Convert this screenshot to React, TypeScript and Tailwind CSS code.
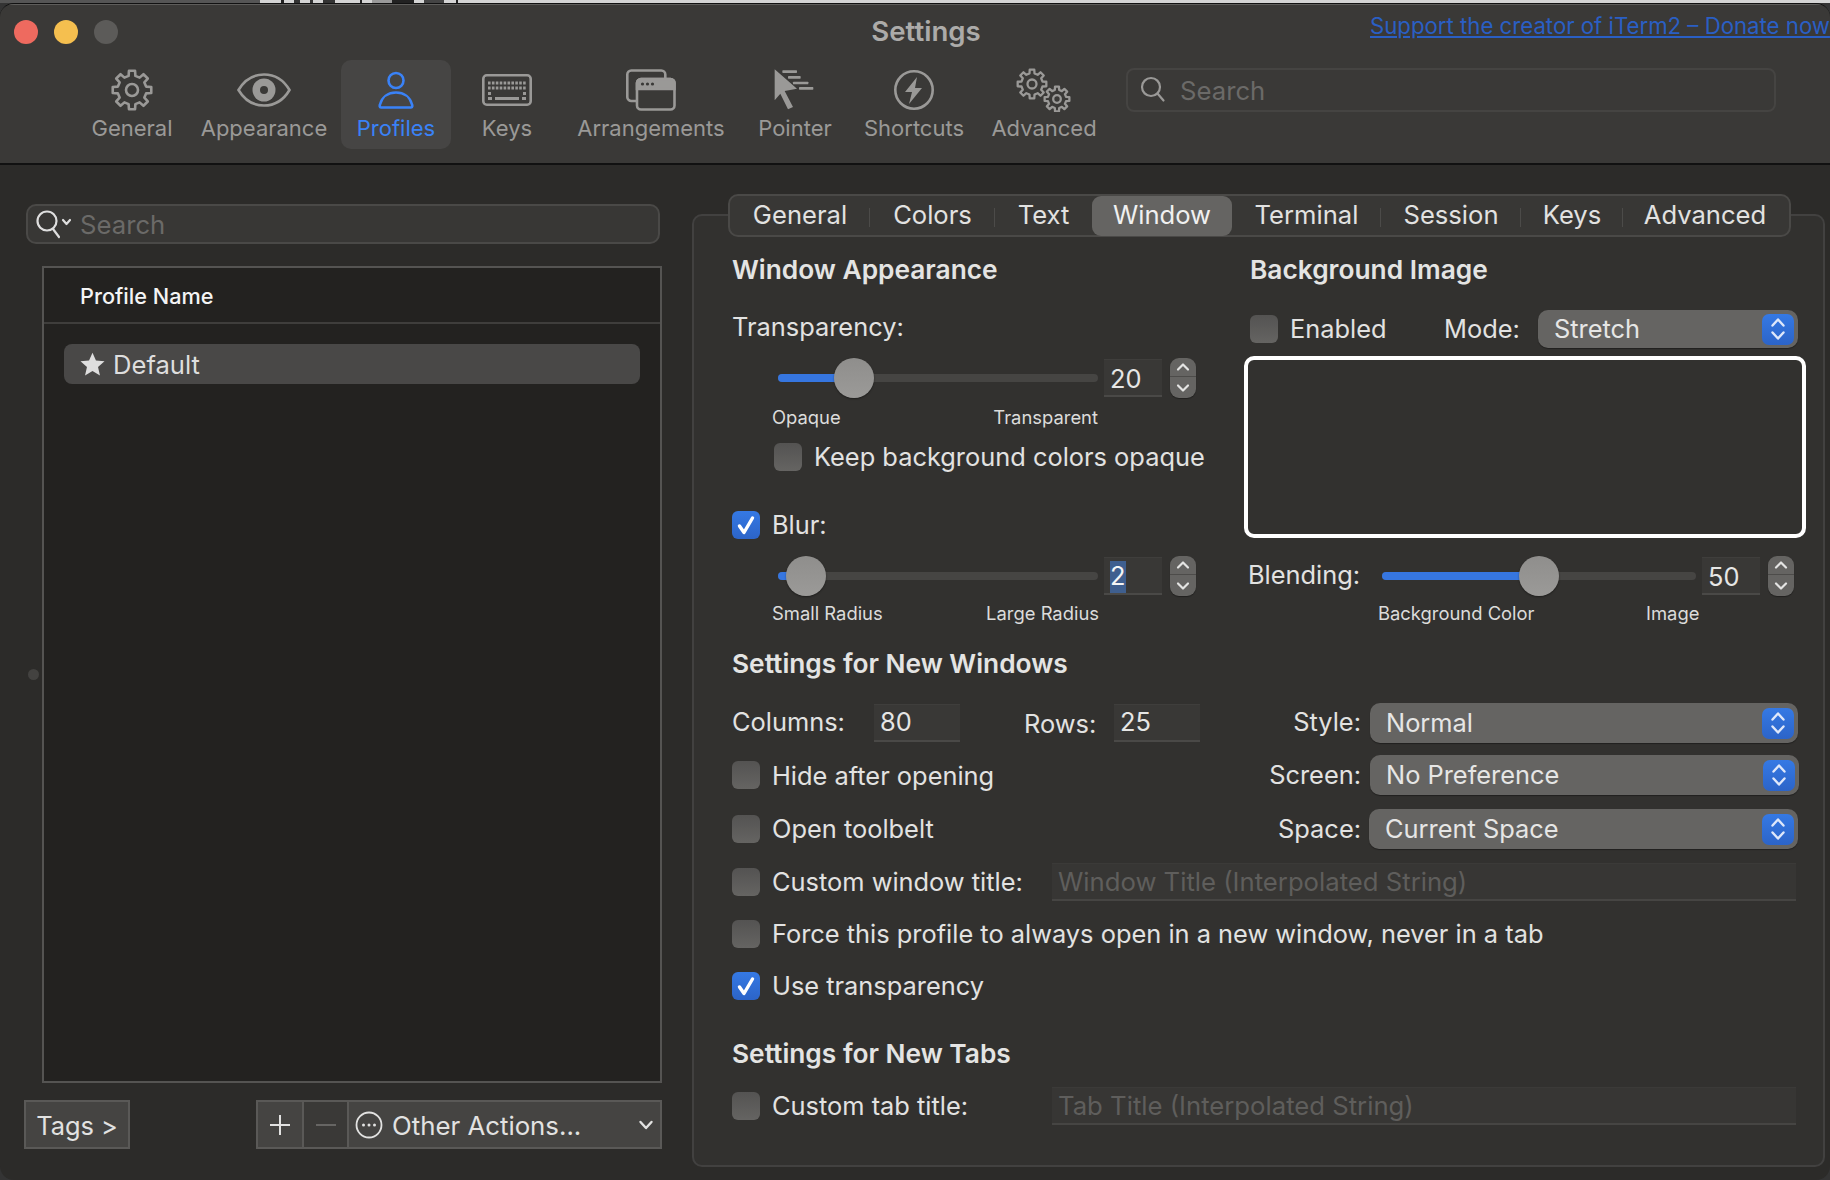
import React from "react";

function gear(cx: number, cy: number, ro: number, ri: number, n: number) {
  const pts: string[] = [];
  const step = (Math.PI * 2) / n;
  for (let i = 0; i < n; i++) {
    const a = i * step - Math.PI / 2;
    const w = step * 0.2;
    const w2 = step * 0.3;
    const p = (r: number, t: number) =>
      `${(cx + r * Math.cos(t)).toFixed(2)},${(cy + r * Math.sin(t)).toFixed(2)}`;
    pts.push(p(ri, a - w2), p(ro, a - w), p(ro, a + w), p(ri, a + w2));
  }
  return pts.join(" ");
}

const GRAY = "#9a9997";

function GearIcon() {
  return (
    <svg width="44" height="44" viewBox="0 0 44 44" fill="none" stroke={GRAY} strokeWidth="2.6" strokeLinejoin="round">
      <polygon points={gear(22, 22, 19.5, 14.5, 8)} />
      <circle cx="22" cy="22" r="6" />
    </svg>
  );
}
function EyeIcon() {
  return (
    <svg width="56" height="36" viewBox="0 0 56 36">
      <path d="M2.5 18C9 7 18 2.5 28 2.5S47 7 53.5 18C47 29 38 33.5 28 33.5S9 29 2.5 18Z" fill="none" stroke={GRAY} strokeWidth="2.6" />
      <circle cx="28" cy="18" r="11.5" fill={GRAY} />
      <circle cx="28" cy="18" r="4" fill="#3a3937" />
    </svg>
  );
}
function PersonIcon() {
  return (
    <svg width="36" height="38" viewBox="0 0 36 38" fill="none" stroke="#3a82f7" strokeWidth="2.6">
      <circle cx="18" cy="9.5" r="7.5" />
      <path d="M3 36.5C1.5 36.5 1.5 35 2 33.5C4 26 10 21.5 18 21.5S32 26 34 33.5C34.5 35 34.5 36.5 33 36.5Z" strokeLinejoin="round" />
    </svg>
  );
}
function KeyboardIcon() {
  const dots: React.ReactNode[] = [];
  for (let r = 0; r < 2; r++)
    for (let c = 0; c < 10; c++)
      dots.push(<rect key={`${r}-${c}`} x={6 + c * 3.9} y={7.5 + r * 5} width="2.6" height="3" fill={GRAY} />);
  return (
    <svg width="50" height="32" viewBox="0 0 50 32">
      <rect x="1.3" y="1.3" width="47.4" height="29.4" rx="3.5" fill="none" stroke={GRAY} strokeWidth="2.6" />
      {dots}
      <rect x="6" y="18" width="3" height="3" fill={GRAY} />
      <rect x="41" y="18" width="3" height="3" fill={GRAY} />
      <rect x="6" y="23" width="4" height="3" fill={GRAY} />
      <rect x="13" y="23" width="24" height="3" fill={GRAY} />
      <rect x="40" y="23" width="4" height="3" fill={GRAY} />
    </svg>
  );
}
function WindowsIcon() {
  return (
    <svg width="50" height="42" viewBox="0 0 50 42" fill="none" stroke={GRAY} strokeWidth="2.6">
      <path d="M10 32H6a4 4 0 0 1-4.7-4V5.5a4 4 0 0 1 4-4h30a4 4 0 0 1 4 4V9" />
      <rect x="11" y="10" width="37.5" height="30.5" rx="4" />
      <path d="M11 14a4 4 0 0 1 4-4h29.5a4 4 0 0 1 4 4v6H11Z" fill={GRAY} />
      <circle cx="16.5" cy="15" r="1.6" fill="#3a3937" stroke="none" />
      <circle cx="21.5" cy="15" r="1.6" fill="#3a3937" stroke="none" />
      <circle cx="26.5" cy="15" r="1.6" fill="#3a3937" stroke="none" />
    </svg>
  );
}
function PointerIcon() {
  return (
    <svg width="44" height="44" viewBox="790 58 132 132" fill={GRAY}>
      <polygon points="795,62 862,120 825,127 850,175 835,182 812,135 795,155" />
      <rect x="818" y="65" width="44" height="8" rx="2" />
      <rect x="835" y="82" width="38" height="8" rx="2" />
      <rect x="850" y="99" width="46" height="8" rx="2" />
      <rect x="868" y="115" width="43" height="8" rx="2" />
    </svg>
  );
}
function BoltIcon() {
  return (
    <svg width="42" height="42" viewBox="0 0 42 42" fill="none">
      <circle cx="21" cy="21" r="18.7" stroke={GRAY} strokeWidth="2.6" />
      <polygon points="24,8 12,23 19,23 16,35 29,19 22,19" fill={GRAY} />
    </svg>
  );
}
function GearsIcon() {
  return (
    <svg width="56" height="44" viewBox="0 0 56 44" fill="none" stroke={GRAY} strokeWidth="2.3" strokeLinejoin="round">
      <polygon points={gear(16, 16, 14.5, 10.8, 8)} />
      <circle cx="16" cy="16" r="4.5" />
      <polygon points={gear(41, 31, 12.5, 9.3, 8)} />
      <circle cx="41" cy="31" r="3.8" />
    </svg>
  );
}

function ToolItem({ w, label, icon, active }: { w: string; label: string; icon: React.ReactNode; active?: boolean }) {
  return (
    <div className={`${w} h-[89px] flex flex-col items-center rounded-[10px] ${active ? "bg-[#464544] text-[#3a82f7]" : "text-[#9a9997]"}`}>
      <div className="h-[50px] mt-[5px] flex items-center justify-center shrink-0">{icon}</div>
      <div className="-mt-[1px] text-[22px] leading-[28px] whitespace-nowrap">{label}</div>
    </div>
  );
}

function Tab({ w, label, sep, active }: { w: string; label: string; sep?: boolean; active?: boolean }) {
  return (
    <div className={`${w} h-full flex items-center justify-center relative`}>
      <div className={`text-[25.6px] h-[40px] pb-[1px] flex items-center justify-center w-full ${active ? "bg-[#656462] rounded-[9px] text-[#f0f0f0]" : "text-[#e2e2e1]"}`}>
        {label}
      </div>
      {sep && <div className="absolute right-0 top-[12px] h-[19px] w-[1px] bg-[#4c4b49]" />}
    </div>
  );
}

function Heading({ children, className = "" }: { children: React.ReactNode; className?: string }) {
  return <div className={`h-[30px] leading-[30px] text-[26.3px] font-semibold text-[#e4e4e3] whitespace-nowrap ${className}`}>{children}</div>;
}

function Check({ on, className = "" }: { on?: boolean; className?: string }) {
  return on ? (
    <div className={`w-[28px] h-[28px] shrink-0 rounded-[6px] bg-linear-to-b from-[#3579e4] to-[#2c64c8] flex items-center justify-center ${className}`}>
      <svg width="22" height="22" viewBox="0 0 22 22" fill="none" stroke="#fff" strokeWidth="3.4" strokeLinecap="round" strokeLinejoin="round">
        <path d="M4.5 12l4.5 6.5L17.5 4" />
      </svg>
    </div>
  ) : (
    <div className={`w-[28px] h-[28px] shrink-0 rounded-[6px] bg-linear-to-b from-[#545352] to-[#656462] ${className}`} />
  );
}

function Chevrons({ color = "#e4e4e3" }: { color?: string }) {
  return (
    <svg width="16" height="26" viewBox="0 0 16 26" fill="none" stroke={color} strokeWidth="2.4" strokeLinecap="round" strokeLinejoin="round">
      <path d="M2.5 9.5L8 3.5l5.5 6" />
      <path d="M2.5 16.5L8 22.5l5.5-6" />
    </svg>
  );
}

function Select({ label, w, full, blueW = "w-[32px]" }: { label: string; w: string; full?: boolean; blueW?: string }) {
  return (
    <div className={`${w} ${full ? "h-[40px]" : "h-[38px]"} shrink-0 rounded-[10px] bg-[#656462] flex items-center pl-[16px] pr-[4px] shadow-[0_1px_1px_rgba(0,0,0,0.35)]`}>
      <span className="flex-1 -mt-[1px] text-[25.4px] leading-[30px] text-[#e6e6e5]">{label}</span>
      <div className={`${blueW} h-[31px] rounded-[7px] bg-linear-to-b from-[#3579e4] to-[#2c64c8] flex items-center justify-center`}>
        <Chevrons color="#dfe8fa" />
      </div>
    </div>
  );
}

function NumBox({ value, w = "w-[58px]", selected, low }: { value: string; w?: string; selected?: boolean; low?: boolean }) {
  return (
    <div className={`${w} h-[38px] shrink-0 bg-[#393836] border-t border-t-[#3f3e3c] border-b-2 border-b-[#4a4947] pl-[6px] flex items-center text-[25.4px] text-[#e6e6e5] ${low ? "pt-[3px]" : ""}`}>
      {selected ? <span className="bg-[#3f5f8f] h-[32px] leading-[30px] text-[#f5f5f5]">{value}</span> : <span>{value}</span>}
    </div>
  );
}

function Stepper() {
  return (
    <div className="w-[26px] h-[40px] shrink-0 rounded-[9px] bg-[#656462] flex flex-col items-center justify-between shadow-[0_1px_1px_rgba(0,0,0,0.35)]">
      <div className="h-[19px] w-full border-b border-b-[#4d4c4a] flex items-center justify-center">
        <svg width="14" height="10" viewBox="0 0 14 10" fill="none" stroke="#e4e4e3" strokeWidth="2.2" strokeLinecap="round" strokeLinejoin="round"><path d="M2 7.5L7 2.5l5 5" /></svg>
      </div>
      <div className="h-[20px] w-full flex items-center justify-center">
        <svg width="14" height="10" viewBox="0 0 14 10" fill="none" stroke="#e4e4e3" strokeWidth="2.2" strokeLinecap="round" strokeLinejoin="round"><path d="M2 2.5l5 5 5-5" /></svg>
      </div>
    </div>
  );
}

function Slider({ w, thumb }: { w: number; thumb: number }) {
  return (
    <div className="relative h-[40px] shrink-0" style={{ width: w }}>
      <div className="absolute left-0 right-0 top-[16px] h-[8px] rounded-full bg-[#464543]" />
      <div className="absolute left-0 top-[16px] h-[8px] rounded-l-full bg-[#3676e0]" style={{ width: thumb }} />
      <div className="absolute top-0 w-[40px] h-[40px] rounded-full bg-linear-to-b from-[#8f8e8c] to-[#9b9a98] shadow-[0_1px_2px_rgba(0,0,0,0.4)]" style={{ left: thumb - 20 }} />
    </div>
  );
}

function Caption({ children }: { children: React.ReactNode }) {
  return <span className="text-[18.4px] leading-[22px] text-[#dcdcdb] whitespace-nowrap">{children}</span>;
}

const label = "text-[25.4px] leading-[30px] text-[#e2e2e1] whitespace-nowrap";

function Field({ placeholder }: { placeholder: string }) {
  return (
    <div className="w-[744px] h-[38px] bg-[#373634] border-t border-t-[#3b3a38] border-b-2 border-b-[#464543] pl-[6px] pt-[2px] flex items-center text-[25.7px] text-[#5f5e5c] whitespace-nowrap">
      {placeholder}
    </div>
  );
}

export default function App() {
  return (
    <div className="w-[1830px] h-[1180px] overflow-hidden bg-[#343434] flex flex-col [font-family:Inter,'Liberation_Sans',sans-serif]">
      {/* what is behind the window */}
      <div className="h-[3px] shrink-0 flex">
        <div className="w-[260px] bg-[#555555]" />
        <div className="flex-1 bg-[#d4d4d4] flex">
          <div className="w-[21px]" />
          <div className="w-[3px] bg-[#222]" />
          <div className="w-[10px]" />
          <div className="w-[6px] bg-[#333]" />
          <div className="w-[10px]" />
          <div className="w-[3px] bg-[#333]" />
          <div className="w-[10px]" />
          <div className="w-[12px] bg-[#333]" />
          <div className="w-[25px]" />
          <div className="w-[2px] bg-[#222]" />
          <div className="w-[10px]" />
          <div className="w-[20px] bg-[#999]" />
          <div className="w-[22px] bg-[#222]" />
          <div className="w-[10px]" />
          <div className="w-[20px] bg-[#444]" />
          <div className="w-[12px]" />
          <div className="w-[2px] bg-[#222]" />
        </div>
      </div>

      {/* window */}
      <div className="flex-1 flex flex-col rounded-[14px] overflow-hidden border-t border-t-[#111] bg-[#2c2b29]">
        {/* toolbar */}
        <div className="h-[161px] shrink-0 bg-[#3a3937] border-b-2 border-b-[#111] shadow-[inset_0_1px_0_#5e5d5b]">
          <div className="h-[56px] grid grid-cols-[842px_168px_1fr] items-center">
            <div className="flex items-center gap-[16px] pl-[14px]">
              <div className="w-[24px] h-[24px] rounded-full bg-[#ee6a5f]" />
              <div className="w-[24px] h-[24px] rounded-full bg-[#f5bf4f]" />
              <div className="w-[24px] h-[24px] rounded-full bg-[#5c5b59]" />
            </div>
            <div className="text-center text-[27.6px] font-semibold text-[#acaba9] -mt-[1px]">Settings</div>
            <div className="pl-[360px] overflow-hidden whitespace-nowrap mb-[12px]">
              <span className="text-[22.2px] leading-[30px] text-[#2a5fc4] underline">Support the creator of iTerm2 – Donate now</span>
            </div>
          </div>
          <div className="flex pl-[77px]">
            <ToolItem w="w-[110px]" label="General" icon={<GearIcon />} />
            <ToolItem w="w-[154px]" label="Appearance" icon={<EyeIcon />} />
            <ToolItem w="w-[110px]" label="Profiles" icon={<PersonIcon />} active />
            <ToolItem w="w-[112px]" label="Keys" icon={<KeyboardIcon />} />
            <ToolItem w="w-[176px]" label="Arrangements" icon={<WindowsIcon />} />
            <ToolItem w="w-[112px]" label="Pointer" icon={<PointerIcon />} />
            <ToolItem w="w-[126px]" label="Shortcuts" icon={<BoltIcon />} />
            <ToolItem w="w-[134px]" label="Advanced" icon={<GearsIcon />} />
            <div className="ml-[15px] mt-[8px] w-[650px] h-[44px] rounded-[8px] border-2 border-[#454442] flex items-center pl-[11px] gap-[13px]">
              <svg width="28" height="28" viewBox="0 0 28 28" fill="none" stroke="#9a9997" strokeWidth="2.2" strokeLinecap="round">
                <circle cx="12" cy="11" r="9" />
                <path d="M18.5 17.5l6 7" />
              </svg>
              <span className="text-[25.7px] text-[#6b6a68] pt-[2px]">Search</span>
            </div>
          </div>
        </div>

        {/* body */}
        <div className="flex-1 flex relative">
          <div className="absolute left-[28px] top-[504px] w-[11px] h-[11px] rounded-full bg-[#434240]" />

          {/* profiles */}
          <div className="w-[692px] shrink-0">
            <div className="mt-[39px] ml-[26px] w-[634px] h-[40px] rounded-[10px] bg-[#383735] border-2 border-[#4a4947] flex items-center pl-[7px] gap-[7px]">
              <svg width="38" height="32" viewBox="0 0 38 32" fill="none" stroke="#dedede" strokeWidth="2.2" strokeLinecap="round" strokeLinejoin="round">
                <circle cx="12" cy="13" r="9.5" />
                <path d="M18 21l6 8" />
                <path d="M28 12l3.5 4 3.5-4" />
              </svg>
              <span className="text-[25.7px] text-[#6b6a68] pt-[3px]">Search</span>
            </div>
            <div className="mt-[22px] ml-[42px] w-[620px] h-[817px] bg-[#232220] border-2 border-[#555452]">
              <div className="h-[56px] border-b-2 border-b-[#3f3e3c] flex items-center pl-[36px] pt-[3px] text-[21.7px] font-medium text-[#f4f4f4]">Profile Name</div>
              <div className="mt-[20px] ml-[20px] w-[576px] h-[40px] rounded-[8px] bg-[#494847] flex items-center pl-[15px] gap-[7px] text-[25.6px] text-[#dedede]">
                <svg width="27" height="26" viewBox="0 0 24 24" fill="#dedede">
                  <path d="M12 1.5l3.2 7.3 7.9.7-6 5.2 1.8 7.8L12 18.4l-6.9 4.1 1.8-7.8-6-5.2 7.9-.7z" />
                </svg>
                <span className="pt-[2px]">Default</span>
              </div>
            </div>
            <div className="mt-[17px] flex h-[49px]">
              <div className="ml-[24px] w-[106px] bg-[#454442] border-2 border-[#5a5957] flex items-center justify-center pt-[3px] text-[25.4px] text-[#e2e2e1]">Tags &gt;</div>
              <div className="ml-[126px] w-[406px] bg-[#454442] border-2 border-[#5a5957] flex">
                <div className="w-[46px] flex items-center justify-center border-r-2 border-r-[#5a5957]">
                  <svg width="24" height="24" viewBox="0 0 24 24" stroke="#e2e2e1" strokeWidth="2"><path d="M12 2v20M2 12h20" /></svg>
                </div>
                <div className="w-[45px] bg-[#3a3937] flex items-center justify-center border-r-2 border-r-[#5a5957]">
                  <svg width="24" height="24" viewBox="0 0 24 24" stroke="#666563" strokeWidth="2"><path d="M2 12h20" /></svg>
                </div>
                <div className="flex-1 flex items-center pl-[6px] pr-[6px] text-[25.8px] text-[#e2e2e1]">
                  <svg width="28" height="28" viewBox="0 0 28 28" fill="#e2e2e1">
                    <circle cx="14" cy="14" r="12.5" fill="none" stroke="#e2e2e1" strokeWidth="1.8" />
                    <circle cx="8.5" cy="14" r="1.5" />
                    <circle cx="14" cy="14" r="1.5" />
                    <circle cx="19.5" cy="14" r="1.5" />
                  </svg>
                  <span className="ml-[9px] flex-1 pt-[3px]">Other Actions...</span>
                  <svg width="16" height="12" viewBox="0 0 16 12" fill="none" stroke="#e2e2e1" strokeWidth="2.4" strokeLinecap="round" strokeLinejoin="round"><path d="M2.5 3l5.5 6 5.5-6" /></svg>
                </div>
              </div>
            </div>
          </div>

          {/* settings panel */}
          <div className="mt-[49px] h-[953px] w-[1133px] shrink-0 rounded-[10px] bg-[#32312f] border-2 border-[#424140]">
            <div className="-mt-[22px] ml-[34px] w-[1063px] h-[43px] rounded-[10px] bg-[#383735] border-2 border-[#4a4947] flex items-center">
              <Tab w="w-[140px]" label="General" sep />
              <Tab w="w-[125px]" label="Colors" sep />
              <Tab w="w-[97px]" label="Text" />
              <Tab w="w-[140px]" label="Window" active />
              <Tab w="w-[149px]" label="Terminal" sep />
              <Tab w="w-[140px]" label="Session" sep />
              <Tab w="w-[102px]" label="Keys" sep />
              <Tab w="w-[164px]" label="Advanced" />
            </div>

            <div className="flex">
              {/* left column */}
              <div className="w-[550px] pl-[38px] shrink-0">
                <Heading className="mt-[18px]">Window Appearance</Heading>
                <div className={`mt-[27px] ${label}`}>Transparency:</div>
                <div className="mt-[16px] ml-[46px] flex items-center">
                  <Slider w={320} thumb={76} />
                  <div className="ml-[6px]"><NumBox value="20" low /></div>
                  <div className="ml-[8px]"><Stepper /></div>
                </div>
                <div className="mt-[8px] ml-[40px] w-[326px] h-[22px] flex justify-between">
                  <Caption>Opaque</Caption>
                  <Caption>Transparent</Caption>
                </div>
                <div className="mt-[15px] ml-[42px] h-[28px] flex items-center gap-[12px]">
                  <Check />
                  <span className={label}>Keep background colors opaque</span>
                </div>
                <div className="mt-[40px] h-[28px] flex items-center gap-[12px]">
                  <Check on />
                  <span className={label}>Blur:</span>
                </div>
                <div className="mt-[17px] ml-[46px] flex items-center">
                  <Slider w={320} thumb={28} />
                  <div className="ml-[6px]"><NumBox value="2" selected low /></div>
                  <div className="ml-[8px]"><Stepper /></div>
                </div>
                <div className="mt-[6px] ml-[40px] w-[327px] h-[22px] flex justify-between">
                  <Caption>Small Radius</Caption>
                  <Caption>Large Radius</Caption>
                </div>
              </div>

              {/* right column */}
              <div className="flex-1">
                <Heading className="mt-[18px] ml-[6px]">Background Image</Heading>
                <div className="mt-[25px] ml-[6px] h-[38px] flex items-center">
                  <Check />
                  <span className={`ml-[12px] w-[154px] ${label}`}>Enabled</span>
                  <span className={`w-[94px] ${label}`}>Mode:</span>
                  <Select label="Stretch" w="w-[260px]" />
                </div>
                <div className="mt-[8px] w-[562px] h-[182px] rounded-[10px] border-[4px] border-white" />
                <div className="mt-[18px] ml-[4px] h-[40px] flex items-center">
                  <span className={`w-[134px] -mt-[2px] ${label}`}>Blending:</span>
                  <Slider w={314} thumb={157} />
                  <div className="ml-[6px]"><NumBox value="50" low /></div>
                  <div className="ml-[8px]"><Stepper /></div>
                </div>
                <div className="mt-[6px] ml-[134px] h-[22px] flex">
                  <div className="w-[268px]"><Caption>Background Color</Caption></div>
                  <Caption>Image</Caption>
                </div>
              </div>
            </div>

            {/* new windows */}
            <div className="pl-[38px]">
              <Heading className="mt-[25px]">Settings for New Windows</Heading>
              <div className="mt-[24px] w-[1066px] h-[40px] flex items-center">
                <span className={`w-[142px] -mt-[2px] ${label}`}>Columns:</span>
                <NumBox value="80" w="w-[86px]" />
                <span className={`ml-[64px] w-[90px] mt-[2px] ${label}`}>Rows:</span>
                <NumBox value="25" w="w-[86px]" />
                <span className={`flex-1 text-right pr-[9px] -mt-[2px] ${label}`}>Style:</span>
                <Select label="Normal" w="w-[428px]" full />
              </div>
              <div className="mt-[12px] w-[1067px] h-[40px] flex items-center">
                <Check />
                <span className={`ml-[12px] mt-[1px] ${label}`}>Hide after opening</span>
                <span className={`flex-1 text-right pr-[9px] -mt-[1px] ${label}`}>Screen:</span>
                <Select label="No Preference" w="w-[429px]" full />
              </div>
              <div className="mt-[14px] w-[1066px] h-[40px] flex items-center">
                <Check />
                <span className={`ml-[12px] ${label}`}>Open toolbelt</span>
                <span className={`flex-1 text-right pr-[8px] -mt-[1px] ${label}`}>Space:</span>
                <Select label="Current Space" w="w-[429px]" full />
              </div>
              <div className="mt-[14px] h-[38px] flex items-center">
                <Check />
                <span className={`ml-[12px] w-[280px] ${label}`}>Custom window title:</span>
                <Field placeholder="Window Title (Interpolated String)" />
              </div>
              <div className="mt-[19px] h-[28px] flex items-center">
                <Check />
                <span className={`ml-[12px] ${label}`}>Force this profile to always open in a new window, never in a tab</span>
              </div>
              <div className="mt-[24px] h-[28px] flex items-center">
                <Check on />
                <span className={`ml-[12px] ${label}`}>Use transparency</span>
              </div>
              <Heading className="mt-[39px]">Settings for New Tabs</Heading>
              <div className="mt-[18px] h-[38px] flex items-center">
                <Check />
                <span className={`ml-[12px] w-[280px] ${label}`}>Custom tab title:</span>
                <Field placeholder="Tab Title (Interpolated String)" />
              </div>
            </div>
          </div>
        </div>
      </div>
    </div>
  );
}
